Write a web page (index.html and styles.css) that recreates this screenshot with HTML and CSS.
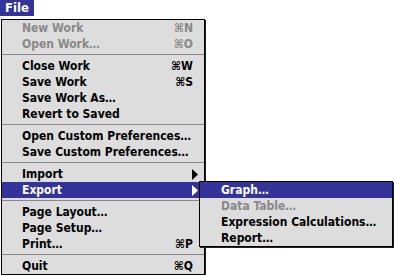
FILE: index.html
```html
<!DOCTYPE html>
<html lang="en">
<head>
    <meta charset="UTF-8">
    <meta name="viewport" content="width=device-width, initial-scale=1.0">
    <title>File menu</title>
    <link rel="stylesheet" href="styles.css">
</head>
<body>
    <div class="menubar">
        <span class="menu-title">File</span>
    </div>

    <div class="menu">
        <div class="item disabled"><span class="label">New Work</span><span class="key">⌘N</span></div>
        <div class="item disabled"><span class="label">Open Work…</span><span class="key">⌘O</span></div>
        <div class="sep"></div>
        <div class="item"><span class="label">Close Work</span><span class="key">⌘W</span></div>
        <div class="item"><span class="label">Save Work</span><span class="key">⌘S</span></div>
        <div class="item"><span class="label">Save Work As…</span></div>
        <div class="item"><span class="label">Revert to Saved</span></div>
        <div class="sep"></div>
        <div class="item"><span class="label">Open Custom Preferences…</span></div>
        <div class="item"><span class="label">Save Custom Preferences…</span></div>
        <div class="sep"></div>
        <div class="item has-sub">
            <span class="label">Import</span>
            <svg class="arrow" width="6" height="11" viewBox="0 0 6 11"><polygon points="0,0 6,5.5 0,11"/></svg>
        </div>
        <div class="item has-sub active">
            <span class="label">Export</span>
            <svg class="arrow" width="6" height="11" viewBox="0 0 6 11"><polygon points="0,0 6,5.5 0,11"/></svg>

            <!-- submenu hangs over the right edge of the main menu -->
            <div class="menu submenu">
                <div class="item active"><span class="label">Graph…</span></div>
                <div class="item disabled"><span class="label">Data Table…</span></div>
                <div class="item"><span class="label">Expression Calculations…</span></div>
                <div class="item"><span class="label">Report…</span></div>
            </div>
        </div>
        <div class="sep"></div>
        <div class="item"><span class="label">Page Layout…</span></div>
        <div class="item"><span class="label">Page Setup…</span></div>
        <div class="item"><span class="label">Print…</span><span class="key">⌘P</span></div>
        <div class="sep"></div>
        <div class="item"><span class="label">Quit</span><span class="key">⌘Q</span></div>
    </div>
</body>
</html>
```

FILE: styles.css
```css
/* Reset */
body {
    margin: 0;
    background-color: #fff;
    font-family: "DejaVu Sans Condensed", "DejaVu Sans", sans-serif;
    font-stretch: condensed;
    font-weight: bold;
    font-size: 12px;
    color: #000;
}

/* Menu bar title */
.menubar {
    height: 19px;
}

.menu-title {
    display: inline-block;
    height: 16px;
    line-height: 16px;
    padding: 0 5px 0 5px;
    font-size: 13px;
    background-color: #333399;
    color: #fff;
}

/* Drop-down panel */
.menu {
    box-sizing: border-box;
    width: 204px;
    margin-left: 1px;
    border: 1px solid #000;
    background-color: #ddd;
    box-shadow: 1px 1px 0 #222;
}

.item {
    position: relative;
    display: flex;
    align-items: center;
    height: 16px;
    padding: 0 11px 0 20px;
    white-space: nowrap;
}

.item .label {
    flex: 1;
}

.disabled {
    color: #888;
}

.active {
    background-color: #333399;
    color: #fff;
}

/* Submenu arrow */
.has-sub {
    padding-right: 6px;
}

.arrow {
    display: block;
    fill: #000;
}

.active .arrow {
    fill: #fff;
}

/* Separator line */
.sep {
    height: 6px;
    position: relative;
}

.sep::before {
    content: "";
    position: absolute;
    left: 0;
    right: 0;
    top: 2px;
    height: 1px;
    background-color: #888;
}

/* Export submenu */
.submenu {
    position: absolute;
    top: -1px;
    left: 197px;
    width: 194px;
    margin-left: 0;
    color: #000;
    z-index: 1;
}

.submenu .item {
    padding-left: 21px;
}

.submenu .disabled {
    color: #888;
}

.submenu .active {
    color: #fff;
}
```
